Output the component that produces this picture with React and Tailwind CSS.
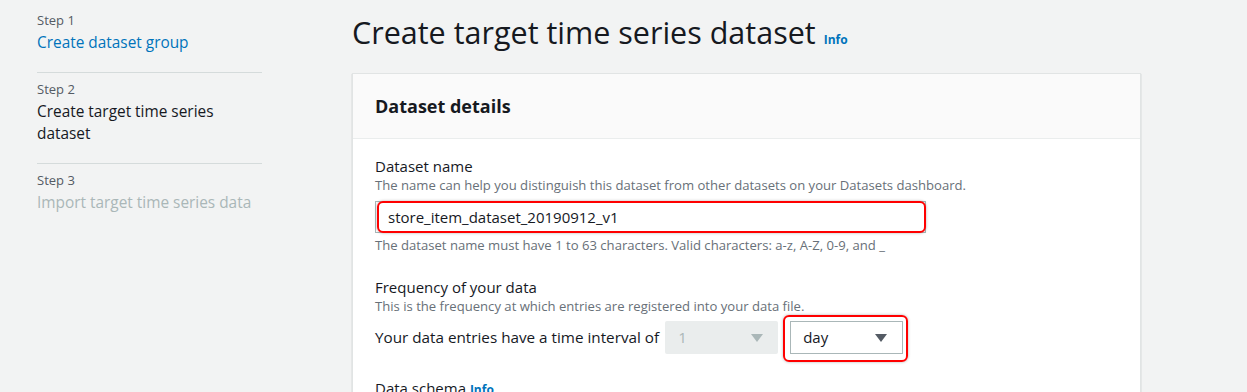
const Caret = ({ className }) => (
  <svg width="12" height="8" viewBox="0 0 12 8" className={className}>
    <path d="M0 0h12L6 8z" fill="currentColor" />
  </svg>
);

const steps = [
  { step: "Step 1", label: "Create dataset group", tone: "text-[#0073bb]" },
  { step: "Step 2", label: "Create target time series dataset", tone: "text-[#16191f]" },
  { step: "Step 3", label: "Import target time series data", tone: "text-[#aab7b8]" },
];

// red annotation frame drawn over a control
const Highlight = ({ className }) => (
  <span
    className={`pointer-events-none absolute border-2 border-[#ff0000] rounded-[6px] shadow-[0_0_3px_rgba(0,0,0,0.3)] ${className}`}
  />
);

export default function App() {
  return (
    <div
      className="w-[1247px] h-[392px] overflow-hidden bg-[#f2f3f3] flex"
      style={{ fontFamily: '"Open Sans", "Noto Sans", sans-serif' }}
    >
      {/* Side navigation */}
      <nav className="w-[225px] ml-[37px] pt-[10px] flex flex-col shrink-0">
        {steps.map((s, i) => (
          <div
            key={s.step}
            className={i < steps.length - 1 ? "pb-[18px] border-b border-[#d5dbdb] mb-[6px]" : ""}
          >
            <div className="text-[13px] leading-[20px] text-[#545b64]">{s.step}</div>
            <div className={`mt-[2px] text-[15.4px] leading-[22px] ${s.tone}`}>{s.label}</div>
          </div>
        ))}
      </nav>

      {/* Main content */}
      <main className="ml-[90px] w-[789px] shrink-0">
        <h1 className="mt-[12px] h-[61px] text-[30.5px] leading-[40px] text-[#16191f] flex items-baseline gap-[8px]">
          Create target time series dataset
          <span className="text-[12px] font-bold text-[#0073bb]">Info</span>
        </h1>

        <section className="bg-white border border-[#e1e4e4] shadow-[0_1px_1px_rgba(0,28,36,0.3)]">
          <header className="h-[65px] bg-[#fafafa] border-b border-[#eaeded] px-[22px] flex items-center">
            <h2 className="text-[18px] font-bold text-[#16191f]">Dataset details</h2>
          </header>

          <div className="px-[22px] pt-[17px]">
            <div className="text-[15px] leading-[20px] text-[#16191f]">Dataset name</div>
            <div className="text-[13.1px] leading-[18px] text-[#687078]">
              The name can help you distinguish this dataset from other datasets on your Datasets dashboard.
            </div>
            <div className="relative mt-[7px] w-[551px] h-[32px] border border-[#aab7b8] flex items-center pl-[12px] text-[15px] text-[#16191f]">
              store_item_dataset_20190912_v1
              <Highlight className="-top-[1px] -bottom-[1px] left-[1px] -right-[1px]" />
            </div>
            <div className="mt-[3px] text-[13.1px] leading-[18px] text-[#687078]">
              The dataset name must have 1 to 63 characters. Valid characters: a-z, A-Z, 0-9, and _
            </div>

            <div className="mt-[23px] text-[15px] leading-[20px] text-[#16191f]">Frequency of your data</div>
            <div className="text-[13.1px] leading-[18px] text-[#687078]">
              This is the frequency at which entries are registered into your data file.
            </div>
            <div className="mt-[6px] flex items-center h-[33px]">
              <span className="text-[15.25px] text-[#16191f]">Your data entries have a time interval of</span>
              <div className="ml-[6px] w-[113px] h-[33px] bg-[#eaeded] rounded-[2px] flex items-center justify-between pl-[13px] pr-[15px] text-[15px] text-[#aab7b8]">
                1
                <Caret className="text-[#aab7b8]" />
              </div>
              <div className="relative ml-[12px] w-[113px] h-[33px] bg-white border border-[#aab7b8] flex items-center justify-between pl-[12px] pr-[15px] text-[15px] text-[#16191f]">
                day
                <Caret className="text-[#545b64]" />
                <Highlight className="-top-[7px] -bottom-[9px] -left-[8px] -right-[6px]" />
              </div>
            </div>

            <div className="mt-[24px] text-[15px] leading-[20px] text-[#16191f]">
              Data schema <span className="font-bold text-[12px] text-[#0073bb]">Info</span>
            </div>
          </div>
        </section>
      </main>
    </div>
  );
}
